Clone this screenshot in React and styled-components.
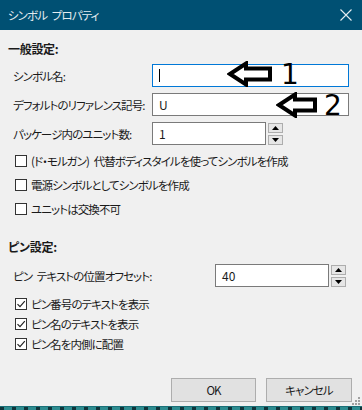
import React from 'react'
import styled, { createGlobalStyle } from 'styled-components'

const GlobalStyle = createGlobalStyle`
  html, body { margin: 0; padding: 0; background: #f0f0f0; }
  * { box-sizing: border-box; }
`

function Check({ checked }) {
  return (
    <Box>
      {checked && (
        <svg width="10" height="10" viewBox="0 0 10 10">
          <path d="M1.5 5.2 L4 7.7 L8.8 2.2" fill="none" stroke="#222" strokeWidth="1.2" />
        </svg>
      )}
    </Box>
  )
}

function Spin() {
  return (
    <SpinCol>
      <SpinBtn>
        <svg width="7" height="4" viewBox="0 0 7 4"><path d="M0 4 L3.5 0 L7 4 Z" fill="#000" /></svg>
      </SpinBtn>
      <SpinBtn>
        <svg width="7" height="4" viewBox="0 0 7 4"><path d="M0 0 L3.5 4 L7 0 Z" fill="#000" /></svg>
      </SpinBtn>
    </SpinCol>
  )
}

function Arrow({ left, top, w }) {
  return (
    <ArrowMark style={{ left, top }} width={w} height="26" viewBox={`0 0 ${w} 26`}>
      <polygon
        points={`3,13 19,2.5 19,7.5 ${w - 3},7.5 ${w - 3},18.5 19,18.5 19,23.5`}
        fill="#fff"
        stroke="#000"
        strokeWidth="4"
        strokeLinejoin="miter"
      />
    </ArrowMark>
  )
}

function App() {
  return (
    <>
      <GlobalStyle />
      <Dialog>
        <TitleBar>
          <span>シンボル プロパティ</span>
          <svg width="12" height="12" viewBox="0 0 12 12">
            <path d="M0.5 0.5 L11.5 11.5 M11.5 0.5 L0.5 11.5" stroke="#e6eef2" strokeWidth="1.1" />
          </svg>
        </TitleBar>
        <Body>
          <Heading>一般設定:</Heading>
          <Fields>
            <Row>
              <Label>シンボル名:</Label>
              <Input $focus $w={197}>
                <Caret />
                <Arrow left={74} top={-4} w={46} />
                <Digit style={{ left: 128, top: -6 }}>1</Digit>
              </Input>
            </Row>
            <Row>
              <Label>デフォルトのリファレンス記号:</Label>
              <Input $w={197}>
                U
                <Arrow left={123} top={-2} w={42} />
                <Digit style={{ left: 171, top: -4 }}>2</Digit>
              </Input>
            </Row>
            <Row>
              <Label>パッケージ内のユニット数:</Label>
              <Input $w={114}>1</Input>
              <Spin />
            </Row>
          </Fields>
          <Checks $pitch={24} $top={4}>
            <CheckRow><Check />(ド・モルガン) 代替ボディスタイルを使ってシンボルを作成</CheckRow>
            <CheckRow><Check />電源シンボルとしてシンボルを作成</CheckRow>
            <CheckRow><Check />ユニットは交換不可</CheckRow>
          </Checks>
          <Heading $top={18}>ピン設定:</Heading>
          <Fields $top={9}>
            <Row>
              <Label $w={207}>ピン テキストの位置オフセット:</Label>
              <Input $w={114}>40</Input>
              <Spin />
            </Row>
          </Fields>
          <Checks $pitch={20} $top={7}>
            <CheckRow><Check checked />ピン番号のテキストを表示</CheckRow>
            <CheckRow><Check checked />ピン名のテキストを表示</CheckRow>
            <CheckRow><Check checked />ピン名を内側に配置</CheckRow>
          </Checks>
          <Buttons>
            <Button $w={85}>OK</Button>
            <Button $w={86}>キャンセル</Button>
          </Buttons>
          <Grip width="8" height="8" viewBox="0 0 8 8">
            <g fill="#a0a0a0">
              <rect x="6" y="0" width="2" height="2" />
              <rect x="3" y="3" width="2" height="2" />
              <rect x="6" y="3" width="2" height="2" />
              <rect x="0" y="6" width="2" height="2" />
              <rect x="3" y="6" width="2" height="2" />
              <rect x="6" y="6" width="2" height="2" />
            </g>
          </Grip>
        </Body>
        <Edge />
      </Dialog>
    </>
  )
}

const Dialog = styled.div`
width: 362px;
height: 410px;
display: flex;
flex-direction: column;
background: #f0f0f0;
font-family: "Noto Sans CJK JP", "Noto Sans", sans-serif;
font-size: 11.5px;
letter-spacing: -0.9px;
word-spacing: 3px;
font-feature-settings: "palt";
color: #1a1a1a;
overflow: hidden;
`;
const TitleBar = styled.div`
height: 30px;
flex: none;
background: #005073;
color: #e4ecf0;
display: flex;
align-items: center;
justify-content: space-between;
padding: 0 10px 0 8px;
`;
const Body = styled.div`
flex: 1;
position: relative;
display: flex;
flex-direction: column;
padding: 0 8px 4px 8px;
`;
const Heading = styled.div`
font-weight: bold;
font-size: 12px;
letter-spacing: -0.3px;
line-height: 16px;
margin-top: ${p => p.$top ?? 11}px;
`;
const Fields = styled.div`
display: flex;
flex-direction: column;
gap: 6px;
margin-top: ${p => p.$top ?? 7}px;
`;
const Row = styled.div`
display: flex;
align-items: center;
height: 23px;
`;
const Label = styled.div`
width: ${p => p.$w ?? 144}px;
padding-left: 5px;
white-space: nowrap;
`;
const Input = styled.div`
position: relative;
width: ${p => p.$w}px;
height: 23px;
background: #fff;
border: 1px solid ${p => (p.$focus ? '#0078d7' : '#7a7a7a')};
display: flex;
align-items: center;
padding-left: 6px;
font-size: 12px;
letter-spacing: 0;
`;
const Caret = styled.div`
width: 1px;
height: 13px;
background: #000;
`;
const ArrowMark = styled.svg`
position: absolute;
`;
const Digit = styled.span`
position: absolute;
font-family: "DejaVu Sans", sans-serif;
font-size: 28px;
line-height: 32px;
color: #000;
`;
const SpinCol = styled.div`
display: flex;
flex-direction: column;
gap: 2px;
margin-left: 2px;
`;
const SpinBtn = styled.div`
width: 15px;
height: 10px;
background: #e6e6e6;
border: 1px solid #adadad;
display: flex;
align-items: center;
justify-content: center;
`;
const Checks = styled.div`
display: flex;
flex-direction: column;
margin-top: ${p => p.$top}px;
& > div { height: ${p => p.$pitch}px; }
`;
const CheckRow = styled.div`
display: flex;
align-items: center;
gap: 4px;
padding-left: 7px;
white-space: nowrap;
`;
const Box = styled.div`
width: 12px;
height: 12px;
flex: none;
border: 1px solid #333;
background: #fff;
display: flex;
align-items: center;
justify-content: center;
`;
const Buttons = styled.div`
margin-top: auto;
display: flex;
justify-content: flex-end;
gap: 10px;
padding-right: 2px;
`;
const Button = styled.div`
width: ${p => p.$w}px;
height: 24px;
background: #e1e1e1;
border: 1px solid #adadad;
display: flex;
align-items: center;
justify-content: center;
`;
const Grip = styled.svg`
position: absolute;
right: 2px;
bottom: 1px;
`;
const Edge = styled.div`
height: 4px;
flex: none;
border-top: 1px solid #1b7078;
background: repeating-linear-gradient(90deg, #10343a 0 4px, #2d8c90 4px 12px);
`;

export default App
